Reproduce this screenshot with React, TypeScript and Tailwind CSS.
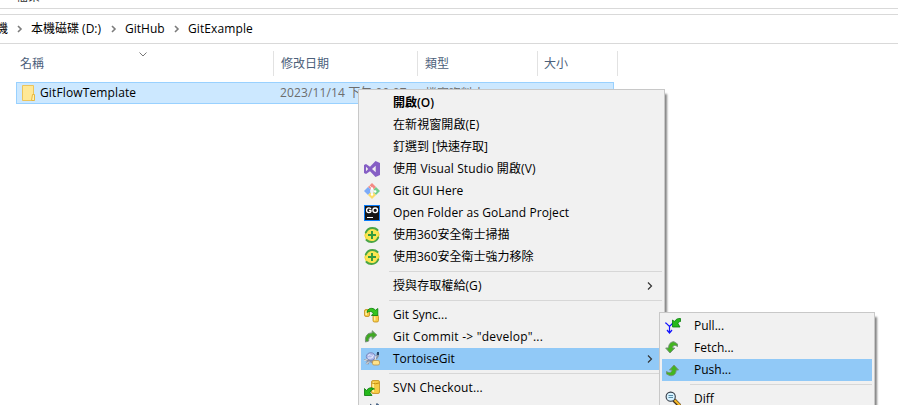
import type { ReactNode } from "react";

const Chevron = ({ className = "" }: { className?: string }) => (
  <svg width="6" height="8" viewBox="0 0 6 8" className={className} fill="none" stroke="currentColor" strokeWidth="1.2">
    <path d="M1 .5l3.500 3.500L1 7.500" />
  </svg>
);

const CrumbArrow = () => (
  <svg width="6" height="8" viewBox="0 0 6 8" className="shrink-0 text-[#7c7c7c]" fill="none" stroke="currentColor" strokeWidth="1.6">
    <path d="M1 1l3 3-3 3" />
  </svg>
);

const Icon = ({ children }: { children: ReactNode }) => (
  <svg width="16" height="16" viewBox="0 0 16 16" className="block">
    {children}
  </svg>
);

const VisualStudio = () => (
  <Icon>
    <path fill="#865fc5" fillRule="evenodd" d="M11.500 0L16 2v12l-4.500 2L6 10.300 2 13l-2-1V4l2-1 4 2.700zM11.700 4.700L8 8l3.700 3.300zM2 5.700v4.600L4.200 8z" />
  </Icon>
);

const GitGui = () => (
  <Icon>
    <path fill="#f58a84" d="M8 0l4 4-2.500 2.500L8 5 6.500 6.500 4 4z" />
    <path fill="#7cabf8" d="M4 4l2.500 2.500L6 8l.5 1.500L4 12 0 8z" />
    <path fill="#72ce8b" d="M12 4l4 4-4 4-2.500-2.500L10 8l-.5-1.500z" />
    <path fill="#fbdc66" d="M6.500 9.500L8 11l1.500-1.500L12 12l-4 4-4-4z" />
    <path stroke="#f0f0f0" strokeWidth="1" fill="none" d="M5.500 2.500l2.500 3V12M8 5.500l3 3" />
    <circle cx="8" cy="5.500" r="1.200" fill="#fff" />
    <circle cx="8" cy="11.500" r="1.200" fill="#fff" />
    <circle cx="11.200" cy="8.500" r="1.200" fill="#fff" />
  </Icon>
);

const GoLand = () => (
  <Icon>
    <path fill="#087cfa" d="M0 0h16v16H0z" />
    <path fill="#151515" d="M1 1h14v14H1z" />
    <path fill="none" stroke="#fff" strokeWidth="1.400" d="M7 3.900Q6.200 2.900 4.800 2.900 2.600 2.900 2.600 5.300T4.800 7.600Q6.500 7.600 6.900 6.800V5.500H4.900" />
    <ellipse cx="11.200" cy="5.300" rx="2.300" ry="2.300" fill="none" stroke="#fff" strokeWidth="1.400" />
    <path fill="#fff" d="M3 12h6v1H3z" />
  </Icon>
);

const Guard = () => (
  <Icon>
    <circle cx="8" cy="8" r="7.200" fill="#fbe650" />
    <path fill="none" stroke="#f2cf35" strokeWidth="1" d="M13.500 3.500A7 7 0 0 1 14 11.500M2 4.500A7 7 0 0 0 2.500 12.500" />
    <path fill="none" stroke="#4aa545" strokeWidth="2" strokeLinecap="round" d="M1.800 5.500C3 2.500 5.500 1 8.500 1c2 0 3.800.7 5 2M14.200 10.500C13 13.500 10.500 15 7.500 15c-2 0-3.800-.7-5-2" />
    <path stroke="#369b3f" strokeWidth="2" d="M8 4v8M4 8h8" />
  </Icon>
);

const Cylinder = ({ x, y, w, h }: { x: number; y: number; w: number; h: number }) => (
  <g>
    <rect x={x} y={y} width={w} height={h} rx="1.500" fill="#f7cb45" stroke="#c18d1c" strokeWidth=".8" />
    <path stroke="#fff1a0" strokeWidth="1.500" d={`M${x + 1.7} ${y + 1.5}v${h - 3}`} />
  </g>
);

const Sync = () => (
  <Icon>
    <Cylinder x={0.5} y={2.5} w={5} h={7} />
    <Cylinder x={9} y={8} w={5.5} h={7} />
    <path fill="#34c41e" stroke="#087d08" strokeWidth=".8" d="M3 5.500C3.500 1 8.500 0 11.500 3.200L13.800 1.500V8.500H7.500L9.300 6.300C7.500 4 5.500 4 3 5.500z" />
  </Icon>
);

const Commit = () => (
  <Icon>
    <path fill="#3fa922" stroke="#78917a" strokeWidth="1" d="M1.500 13C.8 7 3.500 3.700 8.200 4V1.700L12.800 6l-4.600 4.300V7.800C5.300 7.500 4.500 9.500 4.700 12z" />
  </Icon>
);

const Tortoise = () => (
  <Icon>
    <path fill="#8c95a5" d="M2 8L0 8.500 1 10l2 .5L1.500 13l3 .5 1-2.500 3 1.500 2-3 3-2L15 5V1.500L12.500 2 12 5.500 10 8z" />
    <ellipse cx="6.800" cy="5.500" rx="4.500" ry="3.800" fill="#aeb9eb" stroke="#7180b2" strokeWidth=".8" />
    <path stroke="#e9edff" fill="none" d="M4 4.500l2-1 2 2 2-1M4 7h3l2-1" />
    <path fill="#244467" d="M13 1h2v3h-2z" />
    <path stroke="#eee" d="M.5 9.500l3-1M2.500 13l2.500-2.500M12 5l-1 4" />
    <rect x="8.500" y="9.500" width="7" height="4.500" rx="1.500" fill="#ffe38a" stroke="#bc954a" strokeWidth=".8" />
  </Icon>
);

const Checkout = () => (
  <Icon>
    <Cylinder x={7.5} y={0.5} w={8} h={13} />
    <path stroke="#c58d12" fill="none" d="M8 3q3.500 1.500 7 0" />
    <path fill="#25b91b" stroke="#087908" strokeWidth=".8" d="M.5 8.500L2.500 10.500C4.500 7.500 7.500 7 10.500 9c-2 0-3.500 1-4.500 3.500L8 15.500H.5z" />
  </Icon>
);

const Update = () => (
  <Icon>
    <path fill="#647f9f" d="M4 3h5v4H4zM12 2h3v4h-3z" />
    <path stroke="#334e70" d="M6 2l5 4M13 1v3" />
  </Icon>
);

const Pull = () => (
  <Icon>
    <path fill="none" stroke="#1414ff" strokeWidth="1.200" d="M0 5h1l3.500 3.500L8 5M4.500 8.500V15M2 12l2.500 3L7 12" />
    <path fill="#27b91a" stroke="#087f0b" strokeWidth=".8" d="M7.500 2l2 1.500C11 1 13 .2 15.500.5v3c-1.500.1-2 .8-2.500 2l2 3.500H7.500z" />
  </Icon>
);

const Fetch = () => (
  <Icon>
    <path fill="#42b51f" stroke="#76917a" strokeWidth="1" d="M.7 8h2.800C3.800 4 5.500 1.800 9 1.800L12.500 4v2.500C9.500 4.500 7.800 5.500 7.500 8h2.300L5 13z" />
  </Icon>
);

const Push = () => (
  <Icon>
    <path fill="#42b51f" stroke="#76917a" strokeWidth="1" d="M13.500 8h-2.300C11 12 9 14 5 13.700L1.500 12V9.500C4.500 11.500 6.700 10.500 7 8H4.500L9 3z" />
  </Icon>
);

const Magnifier = () => (
  <Icon>
    <path stroke="#43311c" strokeWidth="4" d="M9 9l6 6" />
    <path stroke="#f5b827" strokeWidth="2.200" d="M9.500 9l6 6" />
    <circle cx="5.700" cy="5.700" r="4.600" fill="#d6f2ff" stroke="#343b45" strokeWidth="1.100" />
    <path stroke="#598ca7" d="M3.500 4.500h4.500M3.500 6.500h4.500" />
  </Icon>
);

type Entry = {
  label?: string;
  icon?: ReactNode;
  bold?: boolean;
  active?: boolean;
  arrow?: boolean;
  tracking?: string;
};

const mainEntries: Entry[] = [
  { label: "開啟(O)", bold: true },
  { label: "在新視窗開啟(E)", tracking: "tracking-[0.08px]" },
  { label: "釘選到 [快速存取]" },
  { label: "使用 Visual Studio 開啟(V)", icon: <VisualStudio />, tracking: "tracking-[0.1px]" },
  { label: "Git GUI Here", icon: <GitGui /> },
  { label: "Open Folder as GoLand Project", icon: <GoLand />, tracking: "tracking-[0.08px]" },
  { label: "使用360安全衛士掃描", icon: <Guard /> },
  { label: "使用360安全衛士強力移除", icon: <Guard /> },
  {},
  { label: "授與存取權給(G)", arrow: true, tracking: "tracking-[0.08px]" },
  {},
  { label: "Git Sync...", icon: <Sync /> },
  { label: 'Git Commit -> "develop"...', icon: <Commit />, tracking: "tracking-[0.24px]" },
  { label: "TortoiseGit", icon: <Tortoise />, active: true, arrow: true },
  {},
  { label: "SVN Checkout...", icon: <Checkout />, tracking: "tracking-[0.13px]" },
  { label: "", icon: <Update /> },
];

const subEntries: Entry[] = [
  { label: "Pull...", icon: <Pull /> },
  { label: "Fetch...", icon: <Fetch /> },
  { label: "Push...", icon: <Push />, active: true },
  {},
  { label: "Diff", icon: <Magnifier /> },
];

const Menu = ({ entries }: { entries: Entry[] }) => (
  <div className="border border-[#c8c8c8] bg-[#f1f1f1] p-0.5 shadow-[3px_4px_2px_-1px_#858585]">
    {entries.map((e, i) =>
      e.label === undefined ? (
        <div key={i} className="flex h-[7px] items-center pl-7">
          <div className="h-px w-full bg-[#d7d7d7]" />
        </div>
      ) : (
        <div key={i} className={`flex h-[22px] items-center pr-[9px] ${e.active ? "bg-[#91c9f7]" : ""}`}>
          <div className="w-8 shrink-0 pl-[3px]">{e.icon}</div>
          <span className={`grow whitespace-pre ${e.bold ? "font-semibold" : ""} ${e.tracking ?? ""}`}>{e.label}</span>
          {e.arrow && <Chevron className="text-[#333]" />}
        </div>
      ),
    )}
  </div>
);

export default function App() {
  return (
    <div className="relative h-[405px] w-[898px] overflow-hidden bg-white font-['Open_Sans','Noto_Sans_CJK_TC',sans-serif] text-[12px] leading-[16px] text-black">
      <div className="flex h-[9px] items-end overflow-hidden border-b border-[#d9d9d9] pl-4">
        <span className="mb-[3px] text-[#333]">檔案</span>
      </div>
      <div className="mt-[5px] flex h-[30px] items-center border-y border-[#d9d9d9]">
        <div className="flex w-2 shrink-0 justify-end overflow-hidden">
          <span>機</span>
        </div>
        <div className="flex w-[23px] shrink-0 pl-[9px]"><CrumbArrow /></div>
        <span className="w-[80px] shrink-0">本機磁碟 (D:)</span>
        <div className="w-[14px]"><CrumbArrow /></div>
        <span className="w-[49px]">GitHub</span>
        <div className="w-[14px]"><CrumbArrow /></div>
        <span className="tracking-[0.1px]">GitExample</span>
      </div>
      <div className="flex h-[38px] pt-[7px] text-[#4c607a]">
        <div className="flex h-[25px] w-[274px] items-center border-r border-[#e2e2e2] pl-5">
          <span className="w-[119px]">名稱</span>
          <svg width="8" height="5" viewBox="0 0 8 5" className="mb-[19px]" fill="none" stroke="#777">
            <path d="M.5.5L4 4 7.500.5" />
          </svg>
        </div>
        <div className="flex h-[25px] w-[144px] items-center border-r border-[#e2e2e2] pl-[7px]">修改日期</div>
        <div className="flex h-[25px] w-[120px] items-center border-r border-[#e2e2e2] pl-[7px]">類型</div>
        <div className="flex h-[25px] w-[80px] items-center border-r border-[#e2e2e2] pl-1.5">大小</div>
      </div>
      <div className="ml-4 flex h-[22px] w-[598px] items-center border border-[#99d1ff] bg-[#cce8ff]">
        <svg width="16" height="18" viewBox="0 0 16 18" className="ml-[3px] mr-1 shrink-0">
          <path fill="#ffe896" stroke="#ecc45b" d="M2.500 1.500h11v15h-11z" />
          <path fill="#fff0b0" stroke="#e7b83f" d="M12.500 10.500h2v6h-3z" />
        </svg>
        <span className="w-[240px] tracking-[0.13px]">GitFlowTemplate</span>
        <span className="w-[145px] tracking-[0.12px] text-[#6d6d6d]">2023/11/14 下午 09:07</span>
        <span className="pt-0.5 text-[#6d6d6d]">檔案資料夾</span>
      </div>
      <div className="absolute left-[358px] top-[89px] w-[307px]">
        <Menu entries={mainEntries} />
      </div>
      <div className="absolute left-[659px] top-[312px] h-[120px] w-[216px]">
        <Menu entries={[...subEntries, { label: "" }]} />
      </div>
    </div>
  );
}
